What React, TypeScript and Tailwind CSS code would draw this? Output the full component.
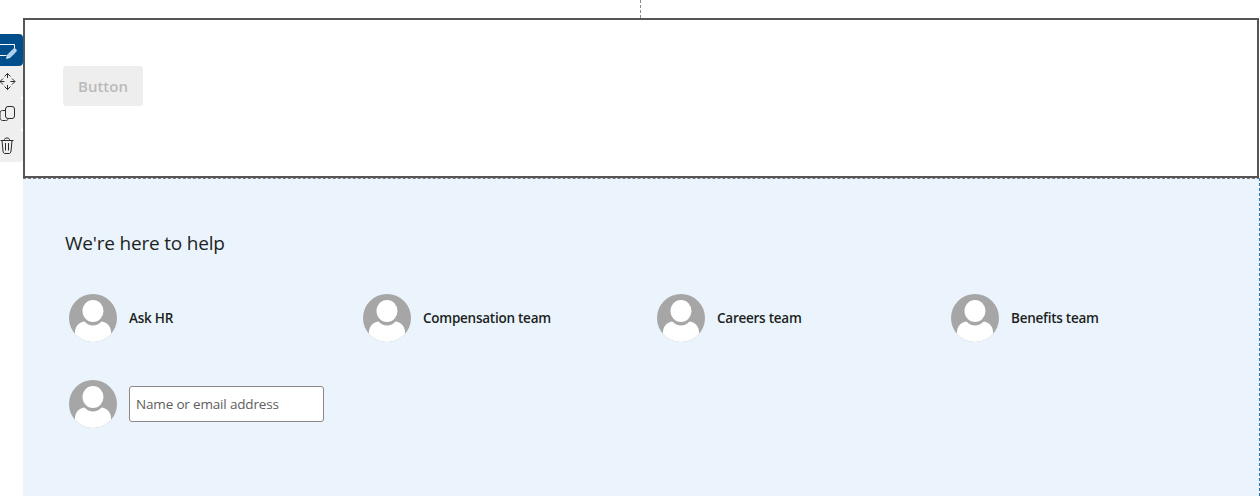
function Avatar({ id }: { id: string }) {
  return (
    <svg width="48" height="48" viewBox="0 0 48 48" className="shrink-0">
      <defs>
        <clipPath id={id}>
          <circle cx="24" cy="24" r="24" />
        </clipPath>
      </defs>
      <circle cx="24" cy="24" r="24" fill="#a6a6a6" />
      <g clipPath={`url(#${id})`}>
        <path d="M6 48V38C6 32.500 10 28.500 15 27.500H33C38 28.500 42 32.500 42 38V48Z" fill="#fff" />
        <ellipse cx="24" cy="18" rx="12" ry="13.500" fill="#a6a6a6" />
        <ellipse cx="24" cy="17" rx="10.500" ry="11" fill="#fff" />
      </g>
    </svg>
  );
}

function Person({ name, id }: { name: string; id: string }) {
  return (
    <div className="flex w-[294px] items-center gap-3 pl-1">
      <Avatar id={id} />
      <span className="text-[13.500px] font-semibold tracking-[-0.25px] text-[#201f1e]">{name}</span>
    </div>
  );
}

function Toolbar() {
  return (
    <div className="absolute left-0 top-4 flex w-[23px] flex-col">
      <div className="flex h-8 items-center justify-end overflow-hidden rounded-r-[4px] bg-[#004e8c]">
        <svg width="23" height="32" viewBox="0 0 23 32" fill="none" className="shrink-0">
          <path d="M-2 10.500H14.500V14.500M6.500 21.500H-2" stroke="#fff" strokeWidth="1" />
          <path d="M6.500 24.500L7.500 21L13 15.500C14 14.500 15 14.500 15.800 15.300C16.500 16 16.500 17 15.600 18L10 23.500Z" fill="#a9cdee" stroke="#fff" strokeWidth="0.700" />
        </svg>
      </div>
      <div className="flex h-8 items-center justify-end rounded-r-[4px] bg-[#efefef]">
        <svg width="23" height="32" viewBox="0 0 23 32" fill="none" stroke="#2b2b2b" strokeWidth="1" className="shrink-0">
          <path d="M4.500 10.500L7.500 7.500L10.500 10.500M7.500 7.500V12M4.500 20.500L7.500 23.500L10.500 20.500M7.500 23.500V19M3 12.500L0 15.500L3 18.500M0 15.500H4.500M12 12.500L15 15.500L12 18.500M15 15.500H10.500" />
        </svg>
      </div>
      <div className="flex h-8 items-center justify-end rounded-r-[4px] bg-[#efefef]">
        <svg width="23" height="32" viewBox="0 0 23 32" fill="none" stroke="#2b2b2b" strokeWidth="1" className="shrink-0">
          <rect x="5.500" y="8.500" width="9" height="12" rx="2.500" />
          <path d="M5 12.500H2.500C1 12.500 0 13.500 0 15V19.500C0 21 1 22.500 2.500 22.500H5.500C7 22.500 8 21.800 8.500 20.500" />
        </svg>
      </div>
      <div className="flex h-8 items-center justify-end rounded-r-[4px] bg-[#efefef]">
        <svg width="23" height="32" viewBox="0 0 23 32" fill="none" stroke="#2b2b2b" strokeWidth="1" className="shrink-0">
          <path d="M0.500 10.500H13.500M4.500 10.500V9.500C4.500 8.500 5.500 8 7 8C8.500 8 9.500 8.500 9.500 9.500V10.500M2 10.500L3 21C3.100 22.500 4 23.500 5 23.500H9C10 23.500 10.900 22.500 11 21L12 10.500M5.500 13V20.500M8.500 13V20.500" />
        </svg>
      </div>
    </div>
  );
}

export default function App() {
  return (
    <div className="relative h-[496px] w-[1260px] overflow-hidden bg-white font-['Open_Sans','Noto_Sans',sans-serif]">
      <div className="flex h-[18px] justify-center pl-[21px]">
        <div className="h-full border-l border-dashed border-[#8a8a8a]" />
      </div>
      <div className="relative pl-[23px] pr-px">
        <Toolbar />
        <div className="h-[160px] border-2 border-[#555555] bg-white pl-[38px] pt-[46px]">
          <button className="h-10 w-20 rounded-[3px] bg-[#eeeeee] text-[15px] font-semibold text-[#bababa]">
            Button
          </button>
        </div>
      </div>
      <div className="ml-[23px] h-[318px] border-r border-t border-dashed border-r-[#1f77c0] border-t-[#7a7a7a] bg-[#ebf4fc] pl-[42px] pt-[50px]">
        <h2 className="text-[19px] leading-[28px] tracking-[-0.2px] text-[#201f1e]">We're here to help</h2>
        <div className="mt-[37px] flex">
          <Person id="a1" name="Ask HR" />
          <Person id="a2" name="Compensation team" />
          <Person id="a3" name="Careers team" />
          <Person id="a4" name="Benefits team" />
        </div>
        <div className="mt-[38px] flex items-center gap-3 pl-1">
          <Avatar id="a5" />
          <input
            readOnly
            placeholder="Name or email address"
            className="h-9 w-[195px] rounded-[3px] border border-[#8a8886] bg-white px-[6px] text-[13.500px] tracking-[-0.17px] text-[#333] placeholder:text-[#605e5c] outline-none"
          />
        </div>
      </div>
    </div>
  );
}
